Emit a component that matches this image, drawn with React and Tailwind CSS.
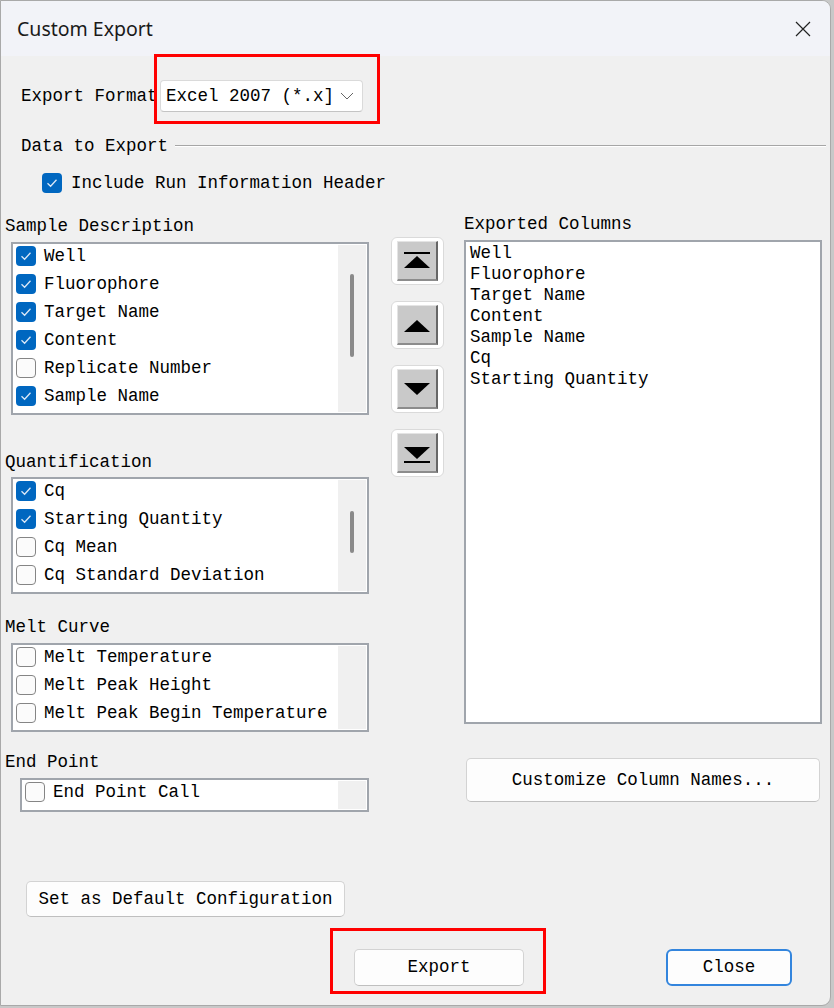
import { useState } from "react";

const mono = "font-['Liberation_Mono','Courier_New',monospace] text-[17.5px] text-black";

function CheckBox({ checked }) {
  if (checked) {
    return (
      <span className="flex h-[20px] w-[20px] shrink-0 items-center justify-center rounded-[4px] bg-[#0067c0]">
        <svg width="12" height="10" viewBox="0 0 12 10" fill="none">
          <path d="M1.5 5.2 L4.6 8.2 L10.5 1.8" stroke="#dbe8f7" strokeWidth="1.3" />
        </svg>
      </span>
    );
  }
  return <span className="h-[20px] w-[20px] shrink-0 rounded-[4px] border border-[#858585] bg-[#fbfbfb]" />;
}

function CheckList({ items, height, thumb, width = "w-[358px]" }) {
  return (
    <div className={`flex ${width} border-2 border-[#a0a5ac] bg-white`} style={{ height }}>
      <div className="flex-1 pl-[3px]">
        {items.map((it) => (
          <div key={it.label} className="flex h-[28px] items-start gap-[8px] pt-[2px]">
            <CheckBox checked={it.checked} />
            <span className="leading-[20px] whitespace-nowrap">{it.label}</span>
          </div>
        ))}
      </div>
      <div className="my-[1px] mr-[1px] flex w-[28px] justify-center bg-[#f0f0f0]">
        {thumb && <div className="w-[4px] rounded-[2px] bg-[#8a8a8a]" style={{ marginTop: thumb[0], height: thumb[1] }} />}
      </div>
    </div>
  );
}

function MoveButton({ kind }) {
  const up = kind === "top" || kind === "up";
  return (
    <div className="flex h-[48px] w-[53px] items-center justify-center rounded-[6px] border border-[#dadada] bg-white">
      <div className="flex h-[40px] w-[41px] items-center justify-center border-t border-l border-t-[#e4e4e4] border-l-[#e4e4e4] border-r-2 border-b-2 border-r-[#666] border-b-[#8c8c8c] bg-[#c9c9c9]">
        <svg width="28" height="22" viewBox="0 0 28 22">
          {kind === "top" && <rect x="1" y="2" width="26" height="2" fill="#000" />}
          {up && <polygon points="1,18 27,18 14,6" fill="#000" />}
          {!up && <polygon points="1,5 27,5 14,17" fill="#000" />}
          {kind === "bottom" && <rect x="1" y="19" width="26" height="2" fill="#000" />}
        </svg>
      </div>
    </div>
  );
}

function WinButton({ children, className = "" }) {
  return (
    <div className={`flex items-center justify-center rounded-[5px] border border-[#d3d3d3] border-b-[#bfbfbf] bg-[#fdfdfd] ${className}`}>
      {children}
    </div>
  );
}

export default function App() {
  const [sample] = useState([
    { label: "Well", checked: true },
    { label: "Fluorophore", checked: true },
    { label: "Target Name", checked: true },
    { label: "Content", checked: true },
    { label: "Replicate Number", checked: false },
    { label: "Sample Name", checked: true },
  ]);
  const quant = [
    { label: "Cq", checked: true },
    { label: "Starting Quantity", checked: true },
    { label: "Cq Mean", checked: false },
    { label: "Cq Standard Deviation", checked: false },
  ];
  const melt = [
    { label: "Melt Temperature", checked: false },
    { label: "Melt Peak Height", checked: false },
    { label: "Melt Peak Begin Temperature", checked: false },
  ];
  const exported = ["Well", "Fluorophore", "Target Name", "Content", "Sample Name", "Cq", "Starting Quantity"];

  return (
    <div className="relative h-[1008px] w-[834px] overflow-hidden bg-[#c8c8c8]">
      <div className="relative flex h-[1006px] w-[831px] flex-col overflow-hidden rounded-tr-[9px] rounded-br-[9px] border border-[#a9a9a9] bg-[#f0f0f0]">
        {/* title bar */}
        <div className="flex h-[55px] shrink-0 items-center justify-between bg-[#f2f3f8] pl-[16px] pr-[19px]">
          <span className="font-['Noto_Sans',sans-serif] text-[19.5px] text-[#1a1a1a]">Custom Export</span>
          <svg width="16" height="16" viewBox="0 0 16 16">
            <path d="M1 1 L15 15 M15 1 L1 15" stroke="#222" strokeWidth="1.2" />
          </svg>
        </div>

        <div className={`flex flex-col ${mono}`}>
          {/* export format */}
          <div className="mt-[24px] flex h-[32px] items-center pl-[20px]">
            <span className="w-[139px] overflow-hidden whitespace-nowrap">Export Format</span>
            <div className="flex h-[32px] w-[203px] items-center justify-between rounded-[4px] border border-[#dadada] border-b-[#c4c4c4] bg-white pl-[5px] pr-[8px]">
              <span className="whitespace-nowrap">Excel 2007 (*.x]</span>
              <svg width="14" height="8" viewBox="0 0 14 8" fill="none">
                <path d="M1 1 L7 7 L13 1" stroke="#666" strokeWidth="1" />
              </svg>
            </div>
          </div>

          {/* data to export */}
          <div className="mt-[24px] flex h-[20px] items-center pl-[20px]">
            <span className="leading-[20px] whitespace-nowrap">Data to Export</span>
            <div className="ml-[7px] mr-[4px] h-0 flex-1 border-t border-b border-t-[#a6a6a6] border-b-white" />
          </div>

          <div className="mt-[17px] flex h-[20px] items-center gap-[9px] pl-[41px]">
            <CheckBox checked />
            <span className="leading-[20px]">Include Run Information Header</span>
          </div>

          {/* three columns */}
          <div className="mt-[21px] flex items-start pl-[4px]">
            <div className="flex w-[365px] flex-col">
              <span className="mt-[2px] h-[20px] leading-[20px]">Sample Description</span>
              <div className="mt-[6px] ml-[6px]">
                <CheckList items={sample} height={173} thumb={[29, 83]} />
              </div>
              <span className="mt-[37px] h-[20px] leading-[20px]">Quantification</span>
              <div className="mt-[5px] ml-[6px]">
                <CheckList items={quant} height={117} thumb={[31, 42]} />
              </div>
              <span className="mt-[23px] h-[20px] leading-[20px]">Melt Curve</span>
              <div className="mt-[6px] ml-[6px]">
                <CheckList items={melt} height={89} />
              </div>
              <span className="mt-[20px] h-[20px] leading-[20px]">End Point</span>
              <div className="mt-[6px] ml-[15px]">
                <CheckList items={[{ label: "End Point Call", checked: false }]} height={34} width="w-[349px]" />
              </div>
            </div>

            <div className="ml-[21px] mt-[23px] flex flex-col gap-[16px]">
              <MoveButton kind="top" />
              <MoveButton kind="up" />
              <MoveButton kind="down" />
              <MoveButton kind="bottom" />
            </div>

            <div className="ml-[20px] flex flex-col">
              <span className="h-[20px] leading-[20px]">Exported Columns</span>
              <div className="mt-[6px] h-[484px] w-[358px] border-2 border-[#a0a5ac] bg-white pl-[4px] pt-[1px]">
                {exported.map((c) => (
                  <div key={c} className="h-[21px] leading-[21px] whitespace-nowrap">
                    {c}
                  </div>
                ))}
              </div>
              <WinButton className="mt-[34px] ml-[2px] h-[44px] w-[354px]">Customize Column Names...</WinButton>
            </div>
          </div>

          <WinButton className="mt-[69px] ml-[25px] h-[36px] w-[319px]">Set as Default Configuration</WinButton>

          <div className="mt-[32px] flex items-center">
            <WinButton className="ml-[353px] h-[37px] w-[170px]">Export</WinButton>
            <div className="ml-[142px] flex h-[37px] w-[126px] items-center justify-center rounded-[6px] border-2 border-[#3385dd] bg-[#fdfdfd]">
              Close
            </div>
          </div>
        </div>
      </div>

      {/* highlight boxes */}
      <div className="absolute left-[154px] top-[54px] h-[70px] w-[226px] border-[3px] border-[#ff0000]" />
      <div className="absolute left-[330px] top-[928px] h-[66px] w-[216px] border-[3px] border-[#ff0000]" />
    </div>
  );
}
